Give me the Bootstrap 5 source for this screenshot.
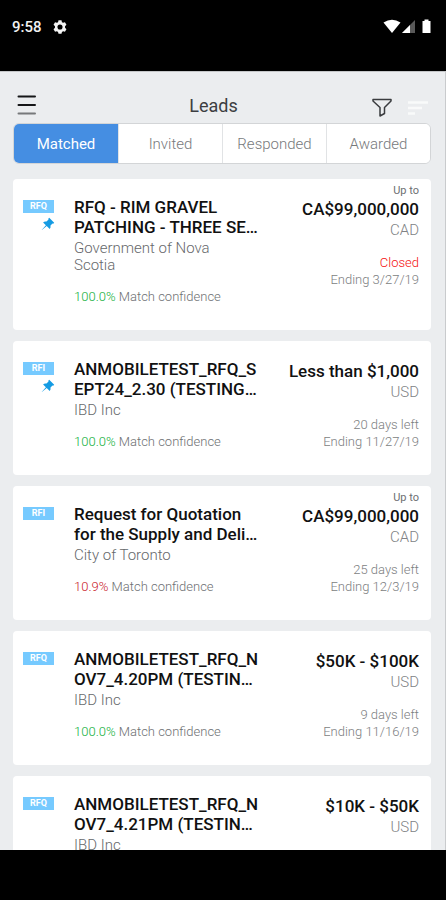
<!DOCTYPE html>
<html lang="en">
<head>
<meta charset="utf-8">
<meta name="viewport" content="width=device-width, initial-scale=1">
<title>Leads</title>
<link href="https://cdn.jsdelivr.net/npm/bootstrap@5.3.0/dist/css/bootstrap.min.css" rel="stylesheet">
<style>
  body { font-family: Roboto, "Liberation Sans", sans-serif; background: #000; color: #111; }
  .status { height: 71px; padding: 17px 14px 0 12px; font-size: 15px; line-height: 20px; font-weight: 500; color: #f2f2f2; }
  .screen { background: #ebedef; border-top: 1px solid #c4c6c8; border-right: 1px solid #c9cbcd; }
  .top { padding: 20px 17px 0 17px; height: 51px; }
  .top h1 { font-size: 18px; line-height: 28px; font-weight: 400; color: #3c3e41; }
  .menu-side { width: 46px; }
  .tools-side { width: 64px; }
  .icon-btn { background: none; border: 0; padding: 0; line-height: 0; }
  .tabs { margin: 0 14px 0 13px; border: 1px solid #d3d5d7; border-radius: 6px; overflow: hidden; background: #fff; }
  .tabs button { border: 0; border-left: 1px solid #e1e3e5; background: #fff; color: #77797c; font-size: 15px; line-height: 22px; padding: 9px 0 8px; font-weight: 300; }
  .tabs button:first-child { border-left: 0; }
  .tabs button.active { background: #458ee2; color: #fff; font-weight: 400; }
  .leads { padding: 15px 14px 0 13px; gap: 11px; }
  .lead-item { background: #fff; border-radius: 4px; padding: 0 12px 0 10px; }
  .kind { width: 32px; margin-right: 19px; padding-top: 21px; }
  .tag { background: #76caff; color: #fff; font-size: 9px; line-height: 13px; font-weight: 700; width: 31px; }
  .pin { margin-top: 4px; }
  .info { padding: 18px 0 25px; }
  .name { font-size: 17px; line-height: 20px; font-weight: 500; margin-bottom: 3px; white-space: nowrap; }
  .org { font-size: 15px; line-height: 17px; font-weight: 300; color: #66686b; margin-bottom: 14px; }
  .match { font-size: 13px; line-height: 17px; font-weight: 300; color: #6d6f72; }
  .high { color: #12b03c; }
  .low { color: #c9202a; }
  .worth { padding-top: 6px; white-space: nowrap; }
  .prefix { font-size: 11px; line-height: 12px; height: 12px; margin-bottom: 2px; color: #6d6f72; }
  .amount { font-size: 17px; line-height: 20px; font-weight: 500; margin-bottom: 1px; }
  .currency { font-size: 15px; line-height: 20px; font-weight: 300; color: #808285; margin-bottom: 14px; }
  .due { font-size: 13px; line-height: 17px; font-weight: 300; color: #7c7e81; }
  .closed { color: #f50f0f; }
  .nav-area { height: 50px; }
</style>
<script src="https://cdn.jsdelivr.net/npm/bootstrap@5.3.0/dist/js/bootstrap.bundle.min.js"></script>
</head>
<body class="vh-100 d-flex flex-column overflow-hidden">
<svg class="d-none">
  <symbol id="pin" viewBox="0 0 14 14"><path d="M8.2.8 13.2 5.800 12.200 6.700 11.500 6.500 9.500 8.600Q9.900 10.700 8.700 12L5.700 9 .9 13.100.700 12.900 4.900 8.200 2.100 5.400Q3.400 4.200 5.500 4.600L7.500 2.500 7.300 1.700Z" fill="#149be3"/></symbol>
</svg>

<div class="status flex-shrink-0 d-flex justify-content-between align-items-start">
  <div class="d-flex align-items-center">
    <span>9:58</span>
    <svg class="ms-2" width="20" height="18" viewBox="0 0 24 24"><path fill="#f4f4f4" fill-rule="evenodd" d="m10 3-.6 2.500-1.500.9-2.500-.8-2 3.500L5.300 11v2l-1.900 1.900 2 3.500 2.500-.8 1.500.9L10 21h4l.6-2.500 1.500-.9 2.500.8 2-3.500-1.900-1.900v-2l1.900-1.900-2-3.500-2.500.8-1.500-.9L14 3ZM12 8.600a3.400 3.400 0 1 1 0 6.800 3.400 3.400 0 0 1 0-6.800Z"/></svg>
  </div>
  <svg width="49" height="20" viewBox="0 0 49 20">
    <path d="M.5 5.500Q9 .200 17.500 5.500L9 16Z" fill="#fff"/>
    <path d="M32 3v13H19Z" fill="#595959"/><path d="M27 8v8h-8Z" fill="#fff"/>
    <path d="M39.500 4h2V2.500h4V4h2v12h-8Z" fill="#fff"/>
  </svg>
</div>

<main class="screen flex-grow-1 overflow-hidden">
  <header class="top d-flex justify-content-between">
    <div class="menu-side">
      <button class="icon-btn" type="button" aria-label="Menu">
        <svg width="20" height="28" viewBox="0 0 20 28" stroke-width="2" stroke-linecap="round"><path d="M1.500 4.500h16.500M1.500 13h16.500" stroke="#151618"/><path d="M1.500 21.500h16.500" stroke="#77797b"/></svg>
      </button>
    </div>
    <h1 class="m-0">Leads</h1>
    <div class="tools-side d-flex justify-content-end gap-3">
      <button class="icon-btn" type="button" aria-label="Filter">
        <svg width="20" height="28" viewBox="0 0 20 28"><path d="M1 5.500h18v1.500L12.500 13.500v6L8 22V13.500L1 7Z" fill="none" stroke="#3a3c3f" stroke-width="1.500" stroke-linejoin="round"/></svg>
      </button>
      <button class="icon-btn" type="button" aria-label="Sort">
        <svg width="20" height="28" viewBox="0 0 20 28" stroke="#f9fafa" stroke-width="2.500"><path d="M0 8.500h20M0 14h14M0 19.500h7"/></svg>
      </button>
    </div>
  </header>

  <nav class="tabs d-flex" aria-label="Lead status">
    <button class="flex-fill w-25 active" type="button">Matched</button>
    <button class="flex-fill w-25" type="button">Invited</button>
    <button class="flex-fill w-25" type="button">Responded</button>
    <button class="flex-fill w-25" type="button">Awarded</button>
  </nav>

  <section class="leads d-flex flex-column">
    <article class="lead-item d-flex">
      <div class="kind flex-shrink-0"><div class="tag text-center">RFQ</div><svg class="pin d-block ms-auto" width="14" height="14"><use href="#pin"/></svg></div>
      <div class="info flex-grow-1">
        <h2 class="name">RFQ - RIM GRAVEL<br>PATCHING - THREE SE…</h2>
        <div class="org">Government of Nova<br>Scotia</div>
        <div class="match"><span class="high">100.0%</span> Match confidence</div>
      </div>
      <div class="worth text-end">
        <div class="prefix">Up to</div><div class="amount">CA$99,000,000</div><div class="currency">CAD</div>
        <div class="due"><span class="closed">Closed</span><br>Ending 3/27/19</div>
      </div>
    </article>
    <article class="lead-item d-flex">
      <div class="kind flex-shrink-0"><div class="tag text-center">RFI</div><svg class="pin d-block ms-auto" width="14" height="14"><use href="#pin"/></svg></div>
      <div class="info flex-grow-1">
        <h2 class="name">ANMOBILETEST_RFQ_S<br>EPT24_2.30 (TESTING…</h2>
        <div class="org">IBD Inc</div>
        <div class="match"><span class="high">100.0%</span> Match confidence</div>
      </div>
      <div class="worth text-end">
        <div class="prefix"></div><div class="amount">Less than $1,000</div><div class="currency">USD</div>
        <div class="due">20 days left<br>Ending 11/27/19</div>
      </div>
    </article>
    <article class="lead-item d-flex">
      <div class="kind flex-shrink-0"><div class="tag text-center">RFI</div></div>
      <div class="info flex-grow-1">
        <h2 class="name">Request for Quotation<br>for the Supply and Deli…</h2>
        <div class="org">City of Toronto</div>
        <div class="match"><span class="low">10.9%</span> Match confidence</div>
      </div>
      <div class="worth text-end">
        <div class="prefix">Up to</div><div class="amount">CA$99,000,000</div><div class="currency">CAD</div>
        <div class="due">25 days left<br>Ending 12/3/19</div>
      </div>
    </article>
    <article class="lead-item d-flex">
      <div class="kind flex-shrink-0"><div class="tag text-center">RFQ</div></div>
      <div class="info flex-grow-1">
        <h2 class="name">ANMOBILETEST_RFQ_N<br>OV7_4.20PM (TESTIN…</h2>
        <div class="org">IBD Inc</div>
        <div class="match"><span class="high">100.0%</span> Match confidence</div>
      </div>
      <div class="worth text-end">
        <div class="prefix"></div><div class="amount">$50K - $100K</div><div class="currency">USD</div>
        <div class="due">9 days left<br>Ending 11/16/19</div>
      </div>
    </article>
    <article class="lead-item d-flex">
      <div class="kind flex-shrink-0"><div class="tag text-center">RFQ</div></div>
      <div class="info flex-grow-1">
        <h2 class="name">ANMOBILETEST_RFQ_N<br>OV7_4.21PM (TESTIN…</h2>
        <div class="org">IBD Inc</div>
      </div>
      <div class="worth text-end">
        <div class="prefix"></div><div class="amount">$10K - $50K</div><div class="currency">USD</div>
      </div>
    </article>
  </section>
</main>
<footer class="nav-area flex-shrink-0"></footer>
</body>
</html>
